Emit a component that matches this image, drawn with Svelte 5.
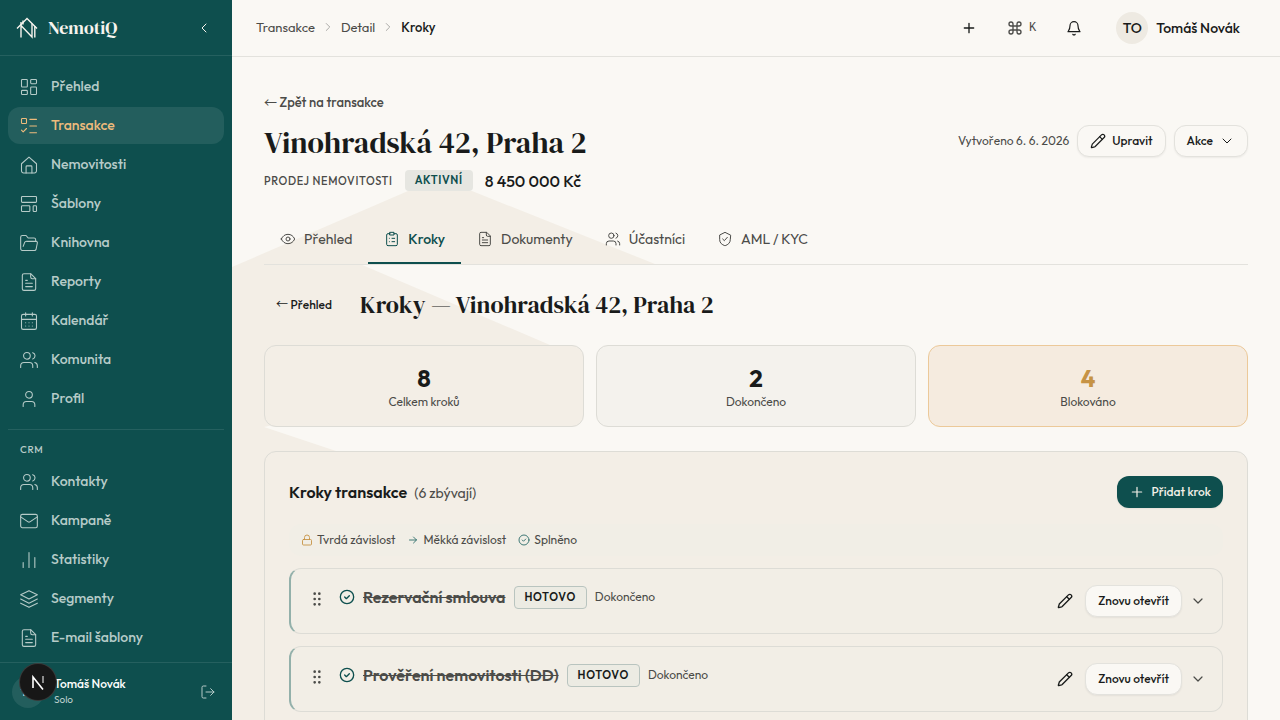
<script lang="ts">
	interface NavItem {
		label: string;
		icon: string;
		active?: boolean;
	}
	interface Stat {
		value: number;
		label: string;
		tone: 'total' | 'done' | 'blocked';
	}

	const icons: Record<string, string[]> = {
		dashboard: [
			'M4 3h5a1 1 0 0 1 1 1v7a1 1 0 0 1-1 1H4a1 1 0 0 1-1-1V4a1 1 0 0 1 1-1z',
			'M15 3h5a1 1 0 0 1 1 1v3a1 1 0 0 1-1 1h-5a1 1 0 0 1-1-1V4a1 1 0 0 1 1-1z',
			'M15 12h5a1 1 0 0 1 1 1v7a1 1 0 0 1-1 1h-5a1 1 0 0 1-1-1v-7a1 1 0 0 1 1-1z',
			'M4 16h5a1 1 0 0 1 1 1v3a1 1 0 0 1-1 1H4a1 1 0 0 1-1-1v-3a1 1 0 0 1 1-1z'
		],
		tasks: ['M4 3h4a1 1 0 0 1 1 1v4a1 1 0 0 1-1 1H4a1 1 0 0 1-1-1V4a1 1 0 0 1 1-1z', 'm3 17 2 2 4-4', 'M13 4h8M13 12h8M13 20h8'],
		home: ['M3 10.5 12 2.5l9 8V19a2.5 2.5 0 0 1-2.5 2.5h-13A2.5 2.5 0 0 1 3 19z', 'M8.5 21.5V14a1 1 0 0 1 1-1h5a1 1 0 0 1 1 1v7.5'],
		template: [
			'M4 3h16a1 1 0 0 1 1 1v5a1 1 0 0 1-1 1H4a1 1 0 0 1-1-1V4a1 1 0 0 1 1-1z',
			'M4 14h8a1 1 0 0 1 1 1v5a1 1 0 0 1-1 1H4a1 1 0 0 1-1-1v-5a1 1 0 0 1 1-1z',
			'M18 14h2a1 1 0 0 1 1 1v5a1 1 0 0 1-1 1h-2a1 1 0 0 1-1-1v-5a1 1 0 0 1 1-1z'
		],
		folder: ['M5 21a2.5 2.5 0 0 1-3-2.500V5a2 2 0 0 1 2-2h4.500l2.500 3h7a2 2 0 0 1 2 2v2', 'M5 21h13.500a2 2 0 0 0 2-1.500l1.500-7.500a1.600 1.600 0 0 0-1.500-2H9a2.500 2.500 0 0 0-2.300 1.500L5 16'],
		file: ['M14 2H6a2 2 0 0 0-2 2v16a2 2 0 0 0 2 2h12a2 2 0 0 0 2-2V8z', 'M14 2v4a2 2 0 0 0 2 2h4', 'M8 10h2M8 13.500h8M8 17.500h8'],
		calendar: ['M5 4h14a2 2 0 0 1 2 2v14a2 2 0 0 1-2 2H5a2 2 0 0 1-2-2V6a2 2 0 0 1 2-2z', 'M8 2v4M16 2v4M3 10h18', 'M8 14h.01M12 14h.01M16 14h.01M8 18h.01M12 18h.01M16 18h.01'],
		users: ['M13.500 7a4 4 0 1 1-8 0 4 4 0 0 1 8 0z', 'M2 21v-2a4 4 0 0 1 4-4h6.500a4 4 0 0 1 4 4v2', 'M16.500 3.200a4 4 0 0 1 0 7.600M22 21v-2a4 4 0 0 0-3-3.900'],
		user: ['M16 7a4 4 0 1 1-8 0 4 4 0 0 1 8 0z', 'M5 21v-2a4 4 0 0 1 4-4h6a4 4 0 0 1 4 4v2'],
		mail: ['M4 4h16a2 2 0 0 1 2 2v12a2 2 0 0 1-2 2H4a2 2 0 0 1-2-2V6a2 2 0 0 1 2-2z', 'm2 7 8.900 6a2 2 0 0 0 2.200 0L22 7'],
		chart: ['M5 21v-6M12 21V3M19 21V9'],
		layers: ['m12 2 10 5-10 5L2 7z', 'm2 12 10 5 10-5', 'm2 17 10 5 10-5'],
		logout: ['M9 21H5a2 2 0 0 1-2-2V5a2 2 0 0 1 2-2h4', 'm16 17 5-5-5-5M21 12H9'],
		left: ['m15 18-6-6 6-6'],
		right: ['m9 18 6-6-6-6'],
		down: ['m6 9 6 6 6-6'],
		plus: ['M5 12h14M12 5v14'],
		command: ['M15 6v12a3 3 0 1 0 3-3H6a3 3 0 1 0 3 3V6a3 3 0 1 0-3 3h12a3 3 0 1 0-3-3'],
		bell: ['M6 8.500a6 6 0 0 1 12 0c0 5 1.500 6.500 3 9H3c1.500-2.500 3-4 3-9', 'M10.300 21.500a2 2 0 0 0 3.400 0'],
		pencil: ['M21.200 6.800a2.800 2.800 0 0 0-4-4L3.800 16.200a2 2 0 0 0-.5.800L2 21.400a.5.5 0 0 0 .6.600L7 20.700a2 2 0 0 0 .8-.5z', 'm14.500 5.500 4 4'],
		eye: ['M2 12c2-4.500 5.500-7 10-7s8 2.500 10 7c-2 4.500-5.500 7-10 7s-8-2.500-10-7z', 'M15 12a3 3 0 1 1-6 0 3 3 0 0 1 6 0z'],
		clipboard: ['M9 4H6a2 2 0 0 0-2 2v14a2 2 0 0 0 2 2h12a2 2 0 0 0 2-2V6a2 2 0 0 0-2-2h-3', 'M9 2h6v4H9z', 'M8 11h.01M8 16h.01M12 11h4M12 16h4'],
		shield: ['M20 13c0 5-3.500 7.500-7.700 9a1 1 0 0 1-.6 0C7.500 20.500 4 18 4 13V6l8-4 8 4z', 'm8.500 12 2.500 2.500 4.500-5'],
		lock: ['M5 11h14a2 2 0 0 1 2 2v7a2 2 0 0 1-2 2H5a2 2 0 0 1-2-2v-7a2 2 0 0 1 2-2z', 'M7 11V7a5 5 0 0 1 10 0v4'],
		arrow: ['M5 12h14M13 6l6 6-6 6'],
		check: ['M22 12a10 10 0 1 1-20 0 10 10 0 0 1 20 0z', 'm8.500 12 2.500 2.500 4.500-4.500'],
		grip: ['M8.500 4h.01M15.500 4h.01M8.500 12h.01M15.500 12h.01M8.500 20h.01M15.500 20h.01']
	};

	const mainNav: NavItem[] = [
		{ label: 'Přehled', icon: 'dashboard' },
		{ label: 'Transakce', icon: 'tasks', active: true },
		{ label: 'Nemovitosti', icon: 'home' },
		{ label: 'Šablony', icon: 'template' },
		{ label: 'Knihovna', icon: 'folder' },
		{ label: 'Reporty', icon: 'file' },
		{ label: 'Kalendář', icon: 'calendar' },
		{ label: 'Komunita', icon: 'users' },
		{ label: 'Profil', icon: 'user' }
	];
	const crmNav: NavItem[] = [
		{ label: 'Kontakty', icon: 'users' },
		{ label: 'Kampaně', icon: 'mail' },
		{ label: 'Statistiky', icon: 'chart' },
		{ label: 'Segmenty', icon: 'layers' },
		{ label: 'E-mail šablony', icon: 'file' }
	];
	const tabs: NavItem[] = [
		{ label: 'Přehled', icon: 'eye' },
		{ label: 'Kroky', icon: 'clipboard', active: true },
		{ label: 'Dokumenty', icon: 'file' },
		{ label: 'Účastníci', icon: 'users' },
		{ label: 'AML / KYC', icon: 'shield' }
	];
	const stats: Stat[] = [
		{ value: 8, label: 'Celkem kroků', tone: 'total' },
		{ value: 2, label: 'Dokončeno', tone: 'done' },
		{ value: 4, label: 'Blokováno', tone: 'blocked' }
	];
	const steps = ['Rezervační smlouva', 'Prověření nemovitosti (DD)'];
</script>

{#snippet icon(name: string, size = 16, stroke = 1.5)}
	<svg
		class="icon"
		width={size}
		height={size}
		viewBox="0 0 24 24"
		fill="none"
		stroke="currentColor"
		stroke-width={stroke}
		stroke-linecap="round"
		stroke-linejoin="round"
		aria-hidden="true"
	>
		{#each icons[name] as d (d)}<path {d} />{/each}
	</svg>
{/snippet}

{#snippet navList(items: NavItem[])}
	<ul class="nav-list">
		{#each items as item (item.label)}
			<li>
				<a class="nav-item" class:active={item.active} href="#nav">
					{@render icon(item.icon, 20, 1.3)}
					<span>{item.label}</span>
				</a>
			</li>
		{/each}
	</ul>
{/snippet}

<div class="app">
	<aside class="sidebar">
		<div class="brand">
			<a class="logo" href="#home">
				<svg width="22" height="22" viewBox="0 0 22 22" fill="none" stroke="currentColor" stroke-width="1.4" aria-hidden="true">
					<path d="M1 11.500 11 1.500 21 11.500" />
					<path d="M5 20.500V8.500L16 20V6.500M5 5v4M18.800 9v11.500M7 3.500v4" />
				</svg>
				<span>NemotiQ</span>
			</a>
			<button class="collapse" aria-label="Sbalit menu">{@render icon('left', 16)}</button>
		</div>
		<nav class="nav">
			{@render navList(mainNav)}
			<hr />
			<h2 class="nav-heading">CRM</h2>
			{@render navList(crmNav)}
		</nav>
		<div class="account">
			<span class="account-avatar">TO</span>
			<div class="account-text">
				<strong>Tomáš Novák</strong>
				<span>Solo</span>
			</div>
			<button class="logout" aria-label="Odhlásit se">{@render icon('logout', 16)}</button>
		</div>
	</aside>

	<div class="page">
		<header class="topbar">
			<nav class="crumbs">
				<a href="#transakce">Transakce</a>
				{@render icon('right', 14, 1.2)}
				<a href="#detail">Detail</a>
				{@render icon('right', 14, 1.2)}
				<strong>Kroky</strong>
			</nav>
			<div class="tools">
				<button aria-label="Přidat">{@render icon('plus', 16, 2)}</button>
				<button class="shortcut">{@render icon('command', 16, 2)}<kbd>K</kbd></button>
				<button aria-label="Oznámení">{@render icon('bell', 16, 1.8)}</button>
				<button class="profile">
					<span class="profile-avatar">TO</span>
					<span>Tomáš Novák</span>
				</button>
			</div>
		</header>

		<main class="content">
			<div class="backdrop"></div>
			<a class="back" href="#transakce"><span class="arrow">←</span> Zpět na transakce</a>
			<div class="title-row">
				<h1>Vinohradská 42, Praha 2</h1>
				<div class="title-actions">
					<span class="created">Vytvořeno 6. 6. 2026</span>
					<button class="btn">{@render icon('pencil', 16, 1.8)}Upravit</button>
					<button class="btn">Akce {@render icon('down', 16)}</button>
				</div>
			</div>
			<div class="meta">
				<span class="kind">Prodej nemovitosti</span>
				<span class="status">Aktivní</span>
				<span class="price">8 450 000 Kč</span>
			</div>

			<nav class="tabs">
				{#each tabs as tab (tab.label)}
					<a class="tab" class:active={tab.active} href="#tab">
						{@render icon(tab.icon, 16)}
						<span>{tab.label}</span>
					</a>
				{/each}
			</nav>

			<div class="section-head">
				<a class="back-small" href="#prehled"><span class="arrow">←</span> Přehled</a>
				<h2>Kroky — Vinohradská 42, Praha 2</h2>
			</div>

			<div class="stats">
				{#each stats as stat (stat.label)}
					<div class="stat {stat.tone}">
						<strong>{stat.value}</strong>
						<span>{stat.label}</span>
					</div>
				{/each}
			</div>

			<section class="panel">
				<div class="panel-head">
					<h3>Kroky transakce <span>(6 zbývají)</span></h3>
					<button class="btn primary">{@render icon('plus', 16, 1.8)}Přidat krok</button>
				</div>
				<div class="legend">
					<span class="hard">{@render icon('lock', 12, 1.8)}Tvrdá závislost</span>
					<span class="soft">{@render icon('arrow', 12, 1.8)}Měkká závislost</span>
					<span class="soft">{@render icon('check', 12, 1.8)}Splněno</span>
				</div>
				<ul class="steps">
					{#each steps as step (step)}
						<li class="step">
							<button class="grip" aria-label="Přesunout">{@render icon('grip', 16, 4)}</button>
							<div class="step-main">
								<span class="step-check">{@render icon('check', 16, 2)}</span>
								<span class="step-name">{step}</span>
								<span class="step-badge">Hotovo</span>
								<span class="step-state">Dokončeno</span>
							</div>
							<div class="step-actions">
								<button class="edit" aria-label="Upravit krok">{@render icon('pencil', 16, 2)}</button>
								<button class="btn">Znovu otevřít</button>
								<button class="expand" aria-label="Rozbalit">{@render icon('down', 16, 1.8)}</button>
							</div>
						</li>
					{/each}
				</ul>
			</section>
		</main>
	</div>

	<button class="dev-badge" aria-label="Dev Tools">
		<svg width="36" height="36" viewBox="0 0 36 36" fill="none" aria-hidden="true">
			<path d="M13 24V13l10 12.500" stroke="#fff" stroke-width="1.600" />
			<path d="M23 12v7" stroke="#aaa" stroke-width="1.600" />
		</svg>
	</button>
</div>

<style>
	:global(body) {
		margin: 0;
	}
	.app {
		--teal: #0e4f4e;
		--paper: #faf8f4;
		--sand: #f3eee6;
		--ink: #191b1a;
		--muted: #4b4b48;
		--line: #e3e2dd;
		--display: 'DM Serif Display', 'Liberation Serif', serif;
		display: flex;
		height: 100vh;
		overflow: hidden;
		background: var(--paper);
		color: var(--ink);
		font-family: 'Outfit', 'Lato', sans-serif;
		font-size: 14px;
		line-height: 20px;
	}
	.app :global(*) {
		box-sizing: border-box;
	}
	button {
		padding: 0;
		border: 0;
		background: none;
		color: inherit;
		font: inherit;
		cursor: pointer;
	}
	a {
		color: inherit;
		text-decoration: none;
	}
	ul,
	h1,
	h2,
	h3 {
		margin: 0;
		padding: 0;
	}
	ul {
		list-style: none;
	}
	.icon {
		display: block;
		flex-shrink: 0;
	}
	.arrow {
		font-family: 'Noto Sans CJK JP', sans-serif;
		font-weight: 400;
		line-height: 1;
	}

	.sidebar {
		display: flex;
		flex-direction: column;
		flex: 0 0 232px;
		background: var(--teal);
		color: #b6cbc8;
	}
	.brand {
		display: flex;
		align-items: center;
		justify-content: space-between;
		flex-shrink: 0;
		height: 56px;
		padding: 0 20px 0 16px;
		border-bottom: 1px solid #25605f;
		color: #f7f4ee;
	}
	.logo {
		display: flex;
		align-items: center;
		gap: 10px;
		font-family: var(--display);
		font-size: 18px;
	}
	.nav {
		flex: 1;
		min-height: 0;
		padding: 12px 8px;
		overflow: hidden;
	}
	.nav-list {
		display: flex;
		flex-direction: column;
		gap: 2px;
	}
	.nav-item {
		display: flex;
		align-items: center;
		gap: 12px;
		padding: 8px 11px;
		border-radius: 12px;
		font-weight: 500;
		line-height: 21px;
	}
	.nav-item.active {
		background: #235e5d;
		color: #eebb7c;
	}
	.nav hr {
		margin: 12px 0;
		border: 0;
		border-top: 1px solid #25605f;
	}
	.nav-heading {
		padding: 0 12px 6px;
		font-size: 10px;
		font-weight: 500;
		line-height: 15px;
		letter-spacing: 0.06em;
	}
	.account {
		display: flex;
		align-items: center;
		gap: 10px;
		flex-shrink: 0;
		height: 58px;
		padding: 0 16px 0 12px;
		border-top: 1px solid #25605f;
	}
	.account-avatar {
		width: 32px;
		height: 32px;
		border-radius: 50%;
		background: #235e5d;
		color: #fff;
		font-size: 11px;
		line-height: 32px;
		text-align: center;
	}
	.account-text {
		display: flex;
		flex: 1;
		flex-direction: column;
		font-size: 10px;
		line-height: 16px;
	}
	.account-text strong {
		color: #fff;
		font-size: 12px;
		font-weight: 500;
	}
	.dev-badge {
		position: fixed;
		bottom: 20px;
		left: 20px;
		width: 36px;
		height: 36px;
		border-radius: 50%;
		background: #171717;
		box-shadow: 0 0 0 1px #3a3a3a;
	}

	.page {
		display: flex;
		flex: 1;
		flex-direction: column;
		min-width: 0;
	}
	.topbar {
		display: flex;
		align-items: center;
		justify-content: space-between;
		flex-shrink: 0;
		height: 57px;
		padding: 0 24px;
		border-bottom: 1px solid var(--line);
	}
	.crumbs {
		display: flex;
		align-items: center;
		gap: 6px;
		padding-bottom: 2px;
		color: var(--muted);
		font-size: 13px;
		line-height: 18px;
	}
	.crumbs strong {
		color: var(--ink);
		font-weight: 500;
	}
	.crumbs .icon {
		color: #8a8a86;
	}
	.tools {
		display: flex;
		align-items: center;
		gap: 30px;
	}
	.shortcut {
		display: flex;
		align-items: center;
		gap: 6px;
		color: var(--muted);
	}
	.shortcut kbd {
		font-family: 'Liberation Mono', monospace;
		font-size: 12px;
	}
	.profile {
		display: flex;
		align-items: center;
		gap: 8px;
		padding: 0 16px 0 4px;
		font-weight: 500;
	}
	.profile-avatar {
		width: 32px;
		height: 32px;
		border-radius: 50%;
		background: #eeeae2;
		line-height: 32px;
	}

	.content {
		position: relative;
		flex: 1;
		min-height: 0;
		padding: 32px;
		overflow: auto;
		scrollbar-width: none;
		isolation: isolate;
	}
	.backdrop {
		position: absolute;
		inset: 0;
		z-index: -1;
		background: var(--sand);
		clip-path: polygon(
			0 210px,
			176px 134px,
			240px 134px,
			423px 207px,
			128px 207px,
			318px 288px,
			318px 310px,
			32px 370px,
			104px 394px,
			104px 440px,
			32px 440px,
			32px 100%,
			0 100%
		);
	}
	.back {
		display: block;
		padding: 4px 0;
		color: var(--muted);
		font-size: 13px;
		font-weight: 500;
		line-height: 18px;
	}
	.title-row {
		display: flex;
		align-items: flex-start;
		justify-content: space-between;
		margin-top: 10px;
	}
	h1,
	.section-head h2 {
		font-family: var(--display);
		font-weight: 400;
	}
	h1 {
		font-size: 30px;
		line-height: 36px;
	}
	.title-actions {
		display: flex;
		align-items: center;
		gap: 8px;
	}
	.created {
		color: var(--muted);
		font-size: 12px;
	}
	.btn {
		display: flex;
		align-items: center;
		gap: 6px;
		height: 32px;
		padding: 0 12px;
		border: 1px solid var(--line);
		border-radius: 12px;
		background: var(--paper);
		box-shadow: 0 1px 2px rgba(0, 0, 0, 0.06);
		font-size: 12px;
		font-weight: 500;
	}
	.meta {
		display: flex;
		align-items: center;
		gap: 12px;
		margin-top: 9px;
	}
	.kind,
	.status {
		font-size: 11px;
		letter-spacing: 0.06em;
		text-transform: uppercase;
	}
	.kind {
		color: var(--muted);
		font-weight: 500;
	}
	.status {
		height: 21px;
		padding: 0 10px;
		border-radius: 4px;
		background: #e6e6e1;
		color: var(--teal);
		font-weight: 600;
		line-height: 21px;
	}
	.price {
		font-size: 16px;
		font-weight: 500;
	}
	.tabs {
		display: flex;
		margin-top: 24px;
		border-bottom: 1px solid var(--line);
	}
	.tab {
		display: flex;
		align-items: center;
		gap: 8px;
		height: 49px;
		padding: 0 16px;
		border-bottom: 2px solid transparent;
		color: var(--muted);
	}
	.tab.active {
		border-color: var(--teal);
		color: var(--teal);
		font-weight: 500;
	}
	.section-head {
		display: flex;
		align-items: center;
		gap: 16px;
		margin-top: 24px;
	}
	.section-head h2 {
		font-size: 24px;
		line-height: 32px;
	}
	.back-small {
		padding: 0 12px;
		font-size: 12px;
		font-weight: 500;
	}

	.stats {
		display: grid;
		grid-template-columns: repeat(3, 1fr);
		gap: 12px;
		margin-top: 24px;
	}
	.stat {
		display: flex;
		flex-direction: column;
		align-items: center;
		padding: 16px;
		border: 1px solid #dddcd6;
		border-radius: 12px;
		background: var(--sand);
	}
	.stat strong {
		font-size: 24px;
		font-weight: 700;
		line-height: 32px;
	}
	.stat span {
		color: var(--muted);
		font-size: 12px;
		line-height: 16px;
	}
	.stat.done {
		background: #f4f2ed;
	}
	.stat.blocked {
		border-color: #ecc999;
		background: #f5ebdf;
	}
	.stat.blocked strong {
		color: #c69345;
	}

	.panel {
		margin-top: 24px;
		padding: 24px;
		border: 1px solid #dddcd6;
		border-radius: 12px;
		background: var(--sand);
	}
	.panel-head {
		display: flex;
		align-items: center;
		justify-content: space-between;
	}
	h3 {
		font-size: 16px;
		font-weight: 600;
	}
	h3 span {
		margin-left: 4px;
		color: var(--muted);
		font-size: 14px;
		font-weight: 400;
	}
	.btn.primary {
		border: 0;
		background: var(--teal);
		color: #f3efe7;
	}
	.legend {
		display: flex;
		gap: 12px;
		margin: 16px 0 12px;
		padding: 6px 12px;
		border-radius: 12px;
		background: #f1eee6;
		color: var(--muted);
		font-size: 12px;
	}
	.legend span {
		display: flex;
		align-items: center;
		gap: 4px;
	}
	.legend .hard .icon {
		color: #c69345;
	}
	.legend .soft .icon {
		color: #2b6b69;
	}
	.steps {
		display: flex;
		flex-direction: column;
		gap: 12px;
	}
	.step {
		display: flex;
		align-items: flex-start;
		gap: 12px;
		min-height: 66px;
		padding: 16px;
		border: 1px solid #dddcd6;
		border-left: 2px solid #93b0aa;
		border-radius: 12px;
		background: #f2eee6;
	}
	.grip {
		display: grid;
		place-items: center;
		width: 20px;
		height: 28px;
		color: var(--muted);
	}
	.step-main {
		display: flex;
		flex: 1;
		align-items: center;
		gap: 8px;
		height: 24px;
		color: var(--muted);
	}
	.step-check {
		color: var(--teal);
	}
	.step-name {
		font-size: 16px;
		font-weight: 600;
		text-decoration: line-through;
	}
	.step-badge {
		height: 23px;
		padding: 0 10px;
		border: 1px solid #b9c4bf;
		border-radius: 4px;
		background: #ecebe3;
		color: var(--ink);
		font-size: 11px;
		font-weight: 600;
		line-height: 21px;
		letter-spacing: 0.06em;
		text-transform: uppercase;
	}
	.step-state {
		font-size: 12px;
	}
	.step-actions {
		display: flex;
		align-items: center;
		gap: 8px;
	}
	.edit {
		padding: 4px;
	}
	.expand {
		color: var(--muted);
	}
</style>
